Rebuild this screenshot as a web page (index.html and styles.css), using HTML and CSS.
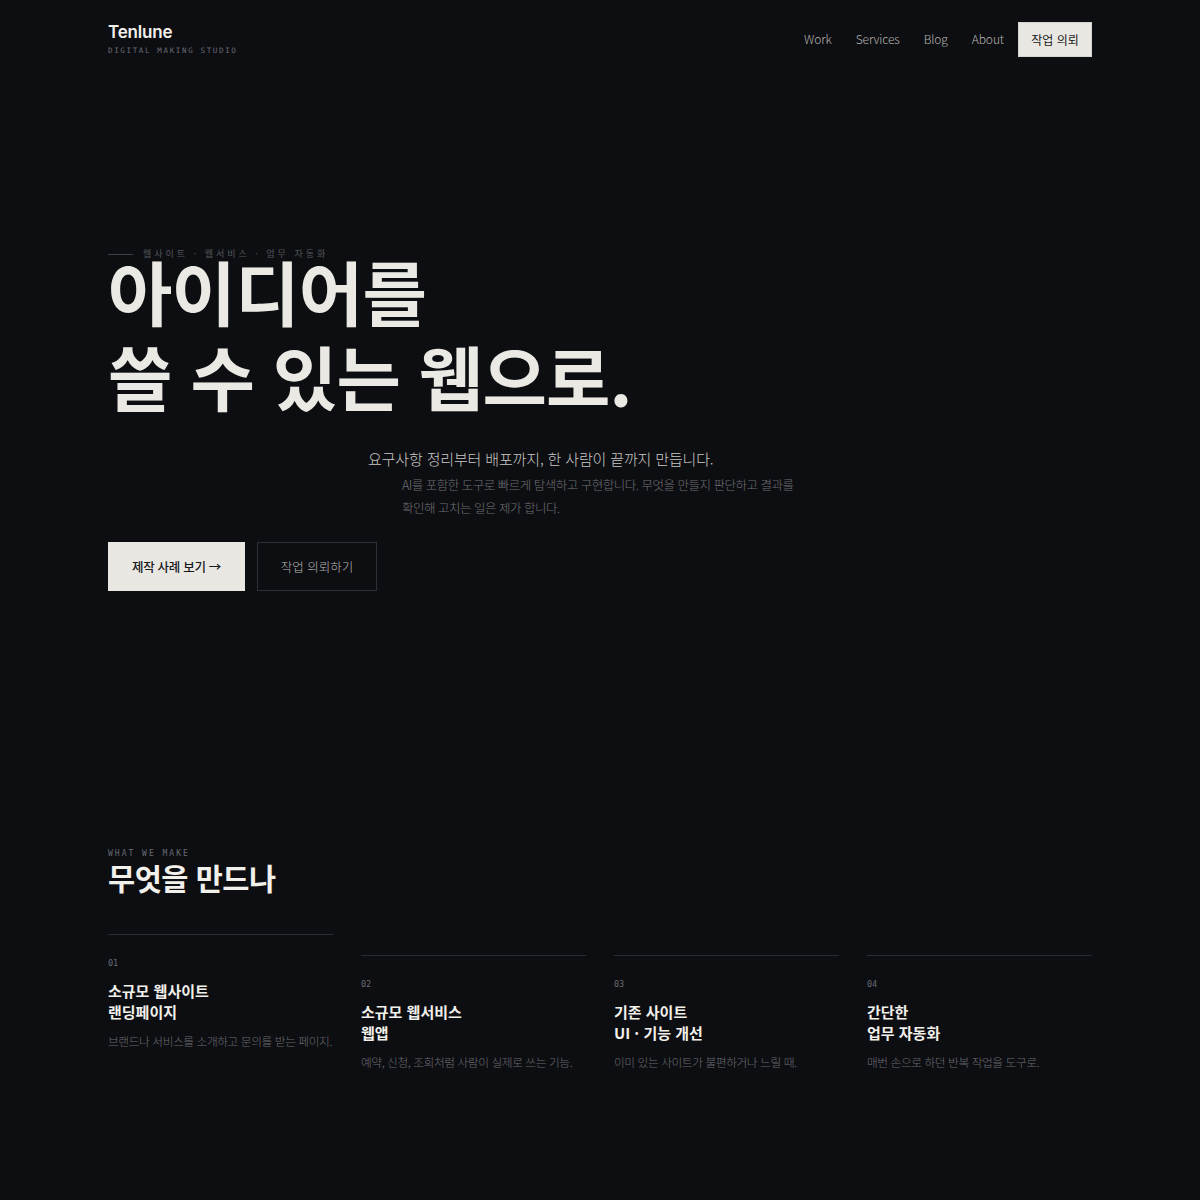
FILE: index.html
```html
<!DOCTYPE html>
<html lang="ko">
<head>
<meta charset="utf-8">
<title>Tenlune</title>
<link rel="stylesheet" href="styles.css">
</head>
<body>
<div class="page">
  <header class="header">
    <div class="brand">
      <div class="brand-name">Tenlune</div>
      <div class="brand-sub">DIGITAL MAKING STUDIO</div>
    </div>
    <nav class="nav">
      <a class="nav-link" href="#">Work</a>
      <a class="nav-link" href="#">Services</a>
      <a class="nav-link" href="#">Blog</a>
      <a class="nav-link" href="#">About</a>
      <a class="nav-cta" href="#">작업 의뢰</a>
    </nav>
  </header>

  <section class="hero">
    <div class="eyebrow"><span class="eyebrow-line"></span><span class="eyebrow-text">웹사이트 · 웹서비스 · 업무 자동화</span></div>
    <h1 class="hero-title"><span class="hero-line">아이디어를</span><span class="hero-line">쓸 수 있는 웹으로.</span></h1>
    <p class="hero-lead">요구사항 정리부터 배포까지, 한 사람이 끝까지 만듭니다.</p>
    <p class="hero-desc">AI를 포함한 도구로 빠르게 탐색하고 구현합니다. 무엇을 만들지 판단하고 결과를 확인해 고치는 일은 제가 합니다.</p>
    <div class="hero-actions">
      <a class="btn btn-primary" href="#">제작 사례 보기 →</a>
      <a class="btn btn-outline" href="#">작업 의뢰하기</a>
    </div>
  </section>

  <section class="make">
    <div class="section-label">WHAT WE MAKE</div>
    <h2 class="section-title">무엇을 만드나</h2>
    <div class="cards">
      <div class="card">
        <div class="card-num">01</div>
        <h3 class="card-title">소규모 웹사이트<br>랜딩페이지</h3>
        <p class="card-desc">브랜드나 서비스를 소개하고 문의를 받는 페이지.</p>
      </div>
      <div class="card">
        <div class="card-num">02</div>
        <h3 class="card-title">소규모 웹서비스<br>웹앱</h3>
        <p class="card-desc">예약, 신청, 조회처럼 사람이 실제로 쓰는 기능.</p>
      </div>
      <div class="card">
        <div class="card-num">03</div>
        <h3 class="card-title">기존 사이트<br>UI · 기능 개선</h3>
        <p class="card-desc">이미 있는 사이트가 불편하거나 느릴 때.</p>
      </div>
      <div class="card">
        <div class="card-num">04</div>
        <h3 class="card-title">간단한<br>업무 자동화</h3>
        <p class="card-desc">매번 손으로 하던 반복 작업을 도구로.</p>
      </div>
    </div>
  </section>
</div>
</body>
</html>
```

FILE: styles.css
```css
* { box-sizing: border-box; }
html, body { margin: 0; padding: 0; }
body {
  background: #0d0e12;
  color: #ebe9e4;
  font-family: "Noto Sans CJK KR", "Noto Sans", sans-serif;
  min-height: 1200px;
  word-break: keep-all;
}
a { text-decoration: none; color: inherit; }
h1, h2, h3, p { margin: 0; }

.page {
  width: 984px;
  margin: 0 auto;
}

/* header */
.header {
  display: flex;
  justify-content: space-between;
  align-items: flex-start;
  padding-top: 21px;
  height: 78px;
}
.brand-name {
  font-family: "Inter", "Liberation Sans", sans-serif;
  font-weight: 600;
  font-size: 17px;
  line-height: 22px;
  letter-spacing: -0.2px;
  color: #f2f0eb;
}
.brand-sub {
  font-family: "DejaVu Sans Mono", monospace;
  font-size: 7.5px;
  letter-spacing: 1.65px;
  color: #6a6c72;
  margin-top: 3px;
}
.nav {
  display: flex;
  align-items: center;
  gap: 24px;
  padding-top: 1px;
}
.nav-link {
  font-size: 12px;
  letter-spacing: -0.1px;
  color: #b5b4b0;
  font-weight: 300;
  line-height: 33px;
  margin-top: -3px;
}
.nav-cta {
  margin-left: -10px;
  width: 74px;
  height: 35px;
  background: #e9e7e2;
  color: #17181b;
  font-size: 12px;
  display: flex;
  align-items: center;
  justify-content: center;
  border: 1px solid #d6d4cf;
}

/* hero */
.hero {
  padding-top: 171px;
}
.eyebrow {
  display: flex;
  align-items: center;
  gap: 10px;
  height: 10px;
}
.eyebrow-line {
  width: 25px;
  height: 1px;
  background: #3e4046;
}
.eyebrow-text {
  font-size: 9px;
  line-height: 10px;
  letter-spacing: 3px;
  color: #54565c;
}
.hero-title {
  margin-top: -0.5px;
  display: flex;
  flex-direction: column;
  gap: 21px;
  font-size: 70px;
  line-height: 64px;
  font-weight: 700;
  letter-spacing: -0.8px;
  color: #ebe9e4;
}
.hero-line {
  display: block;
}
.hero-lead {
  margin-top: 39.5px;
  margin-left: 260px;
  font-size: 15px;
  line-height: 24px;
  font-weight: 300;
  letter-spacing: -0.15px;
  color: #c9c8c4;
}
.hero-desc {
  margin-top: 2px;
  margin-left: 294px;
  width: 400px;
  font-size: 12.5px;
  line-height: 23px;
  font-weight: 300;
  letter-spacing: -0.5px;
  color: #6f7075;
}
.hero-actions {
  display: flex;
  gap: 12px;
  margin-top: 23px;
}
.btn {
  height: 49px;
  display: flex;
  align-items: center;
  justify-content: center;
  font-size: 12.5px;
}
.btn-primary {
  width: 137px;
  background: #e9e7e2;
  color: #17181b;
  font-weight: 500;
  letter-spacing: -0.3px;
}
.btn-outline {
  width: 120px;
  border: 1px solid #2d2f34;
  color: #b8b7b3;
  font-weight: 300;
}

/* make */
.make {
  padding-top: 257px;
}
.section-label {
  font-family: "DejaVu Sans Mono", monospace;
  font-size: 8px;
  letter-spacing: 2px;
  color: #6a6c72;
  line-height: 12px;
}
.section-title {
  font-size: 29.5px;
  line-height: 34px;
  font-weight: 700;
  letter-spacing: -0.5px;
  color: #f2f0eb;
}
.cards {
  display: grid;
  grid-template-columns: repeat(4, 1fr);
  gap: 28px;
  margin-top: 40px;
  align-items: start;
}
.card {
  border-top: 1px solid #2a2c31;
  padding-top: 22px;
}
.card + .card {
  margin-top: 21px;
}
.card-num {
  font-family: "DejaVu Sans Mono", monospace;
  font-size: 8.5px;
  color: #6a6c72;
  line-height: 12px;
}
.card-title {
  margin-top: 11px;
  font-size: 15px;
  line-height: 21px;
  font-weight: 700;
  color: #f2f0eb;
}
.card-desc {
  margin-top: 9px;
  font-size: 11.7px;
  line-height: 20px;
  font-weight: 300;
  letter-spacing: -0.4px;
  color: #6b6c71;
}
```
